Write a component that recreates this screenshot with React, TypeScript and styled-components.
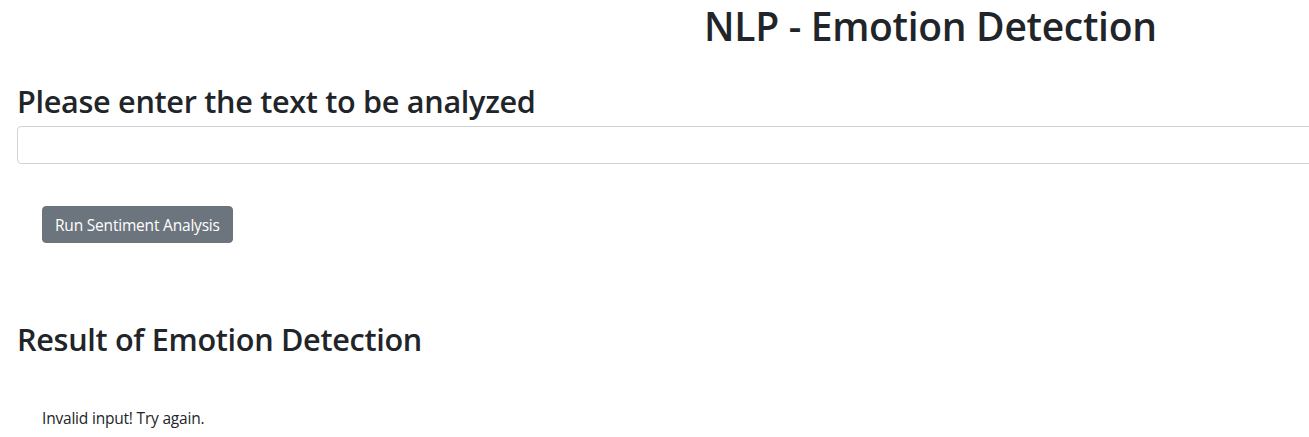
import React from "react";
import styled, { createGlobalStyle } from "styled-components";

const Global = createGlobalStyle`
  html, body { margin: 0; padding: 0; background: #fff; overflow: hidden; }
  body {
    font-family: "Open Sans", "Noto Sans", sans-serif;
    color: #212529;
    width: 1309px;
  }
  * { box-sizing: border-box; }
`;

const Page = styled.div`
  display: flex;
  flex-direction: column;
  padding: 0 0 0 17px;
  width: 1400px;
`;

const Title = styled.h1`
  margin: 0;
  padding: 2px 0 0 687px;
  font-size: 39px;
  font-weight: 600;
  line-height: 48px;
  letter-spacing: -0.3px;
`;

const Heading = styled.h2<{ $top: number }>`
  margin: ${(p) => p.$top}px 0 6px;
  font-size: 30.6px;
  font-weight: 600;
  line-height: 38px;
  letter-spacing: -0.3px;
`;

const TextInput = styled.input`
  display: block;
  width: 1400px;
  height: 38px;
  border: 1px solid #ced4da;
  border-radius: 4px;
  padding: 6px 12px;
  font: inherit;
  font-size: 16px;
`;

const Indented = styled.div`
  padding-left: 25px;
`;

const Button = styled.button`
  margin-top: 42px;
  height: 37px;
  padding: 0 12px;
  background: #6c757d;
  color: #fff;
  border: 1px solid #6c757d;
  border-radius: 4px;
  font-family: inherit;
  font-size: 15.5px;
  letter-spacing: -0.2px;
`;

const Message = styled.p`
  margin: 43px 0 0;
  font-size: 15.5px;
  letter-spacing: -0.2px;
  line-height: 22px;
`;

export default function App() {
  return (
    <>
      <Global />
      <Page>
        <Title>NLP - Emotion Detection</Title>
        <Heading $top={32}>Please enter the text to be analyzed</Heading>
        <TextInput type="text" />
        <Indented>
          <Button type="button">Run Sentiment Analysis</Button>
        </Indented>
        <Heading $top={77}>Result of Emotion Detection</Heading>
        <Indented>
          <Message>Invalid input! Try again.</Message>
        </Indented>
      </Page>
    </>
  );
}
